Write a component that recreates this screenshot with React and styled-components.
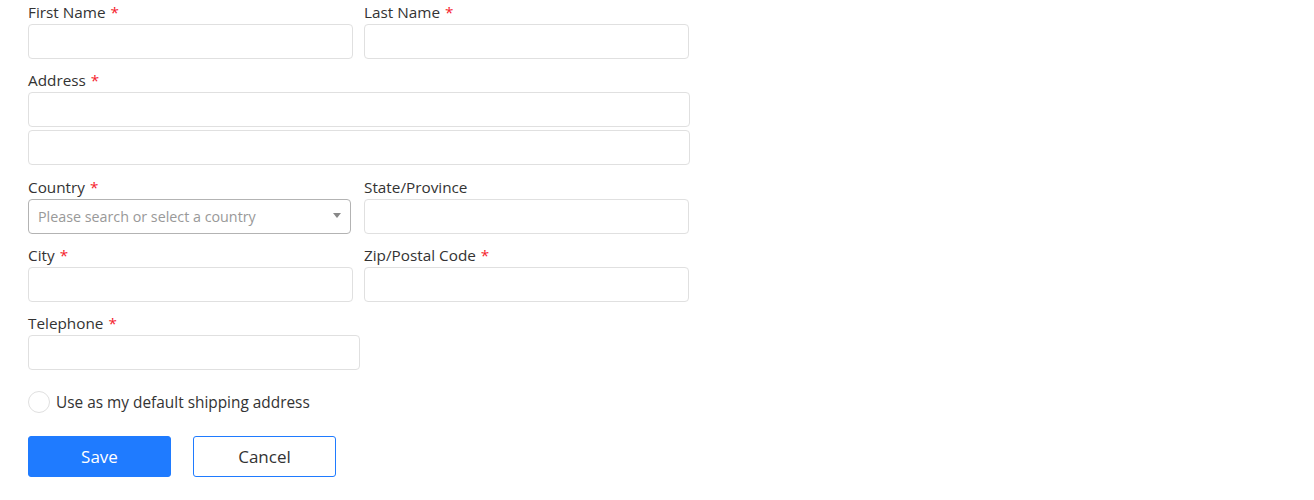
import React from 'react'
import styled, { createGlobalStyle } from 'styled-components'

const GlobalStyle = createGlobalStyle`
  body {
    margin: 0;
    background: #fff;
    font-family: 'Open Sans', 'Noto Sans', sans-serif;
    color: #333;
  }
`

const Form = styled.form`
  width: 662px;
  padding-left: 28px;
  display: flex;
  flex-direction: column;
`

const Row = styled.div`
  display: grid;
  grid-template-columns: 325px 325px;
  column-gap: 11px;
  margin-bottom: ${p => p.$gap || 9}px;
`

const Field = styled.div`
  display: flex;
  flex-direction: column;
  margin-bottom: ${p => p.$gap || 0}px;
`

const Label = styled.label`
  font-size: 15.3px;
  line-height: 24px;
  height: 24px;
  color: #333;
`

const Star = styled.span`
  color: #f5222d;
  margin-left: 5px;
`

const Input = styled.input`
  box-sizing: border-box;
  width: ${p => (p.$width ? `${p.$width}px` : '100%')};
  height: 35px;
  border: 1px solid #e0e0e0;
  border-radius: 4px;
  padding: 0 10px;
  font-family: inherit;
  font-size: 14px;
  outline: none;
  background: #fff;
  & + & {
    margin-top: 3px;
  }
`

const Select = styled.div`
  box-sizing: border-box;
  width: 323px;
  height: 35px;
  border: 1px solid #b3b3b3;
  border-radius: 4px;
  padding: 0 9px;
  display: flex;
  align-items: center;
  justify-content: space-between;
  font-size: 14.3px;
  color: #999;
`

const Caret = styled.span`
  width: 0;
  height: 0;
  border-left: 4px solid transparent;
  border-right: 4px solid transparent;
  border-top: 5px solid #888;
  margin-top: -2px;
`

const CheckRow = styled.label`
  display: flex;
  align-items: center;
  gap: 6px;
  margin-top: 21px;
  font-size: 15.4px;
  color: #333;
  height: 22px;
`

const Radio = styled.span`
  box-sizing: border-box;
  width: 22px;
  height: 22px;
  border: 1px solid #e0e0e0;
  border-radius: 50%;
`

const Actions = styled.div`
  display: flex;
  gap: 22px;
  margin-top: 23px;
`

const Button = styled.button`
  box-sizing: border-box;
  width: 143px;
  height: 41px;
  border-radius: 3px;
  font-family: inherit;
  font-size: 17px;
  cursor: pointer;
  border: 1px solid #1f7bff;
  background: ${p => (p.$primary ? '#1f7bff' : '#fff')};
  color: ${p => (p.$primary ? '#fff' : '#333')};
`

const Req = () => <Star>*</Star>

export default function App() {
  return (
    <>
      <GlobalStyle />
      <Form onSubmit={e => e.preventDefault()}>
        <Row>
          <Field>
            <Label>First Name<Req /></Label>
            <Input />
          </Field>
          <Field>
            <Label>Last Name<Req /></Label>
            <Input />
          </Field>
        </Row>
        <Field $gap={10}>
          <Label>Address<Req /></Label>
          <Input />
          <Input />
        </Field>
        <Row>
          <Field>
            <Label>Country<Req /></Label>
            <Select>
              Please search or select a country
              <Caret />
            </Select>
          </Field>
          <Field>
            <Label>State/Province</Label>
            <Input />
          </Field>
        </Row>
        <Row>
          <Field>
            <Label>City<Req /></Label>
            <Input />
          </Field>
          <Field>
            <Label>Zip/Postal Code<Req /></Label>
            <Input />
          </Field>
        </Row>
        <Field>
          <Label>Telephone<Req /></Label>
          <Input $width={332} />
        </Field>
        <CheckRow>
          <Radio />
          Use as my default shipping address
        </CheckRow>
        <Actions>
          <Button type="submit" $primary>Save</Button>
          <Button type="button">Cancel</Button>
        </Actions>
      </Form>
    </>
  )
}
